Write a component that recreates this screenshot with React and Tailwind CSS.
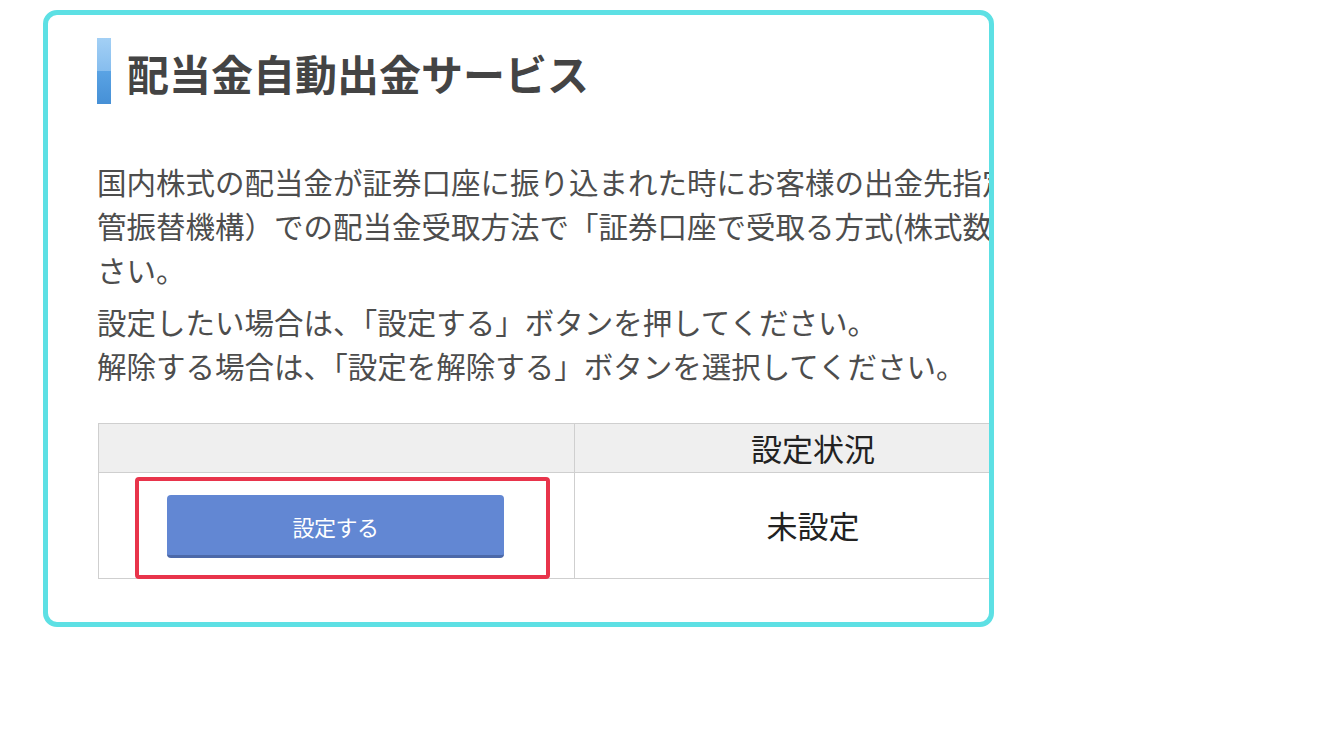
const JP = { fontFamily: '"Hiragino Sans", "Noto Sans CJK JP", "Noto Sans", sans-serif' };

export default function App() {
  return (
    <div className="w-[1320px] h-[743px] bg-white pt-[10px] pl-[43px]" style={JP}>
      {/* card */}
      <div className="w-[951px] h-[617px] border-[5px] border-[#5de0e4] rounded-[14px] overflow-hidden pl-[49px] pt-[23px] bg-white">
        {/* heading */}
        <div className="flex items-center">
          <div className="w-[14px] h-[66px] flex flex-col">
            <div className="flex-1 bg-gradient-to-b from-[#a3d0f5] to-[#86bdee]" />
            <div className="flex-1 bg-gradient-to-b from-[#5aa3e4] to-[#4690d6]" />
          </div>
          <h1 className="ml-[16px] mt-[3px] text-[42px] leading-none font-bold text-[#444]">
            配当金自動出金サービス
          </h1>
        </div>

        {/* description */}
        <div className="mt-[55px] text-[29.5px] leading-[44px] text-[#4d4d4d] whitespace-nowrap">
          <p>
            国内株式の配当金が証券口座に振り込まれた時にお客様の出金先指定口座へ自動的に出金するサービスです。ご利用には、証券保
            <br />
            管振替機構）での配当金受取方法で「証券口座で受取る方式(株式数比例配分方式)」を選択いただく必要がございます。ご確認くだ
            <br />
            さい。
          </p>
          <p className="mt-[8px]">
            設定したい場合は、「設定する」ボタンを押してください。
            <br />
            解除する場合は、「設定を解除する」ボタンを選択してください。
          </p>
        </div>

        {/* settings table */}
        <div className="mt-[36px] w-[954px] border border-[#cfcfcf] ml-px">
          <div className="grid grid-cols-[476px_1fr] h-[49px] bg-[#efefef] border-b border-[#cfcfcf]">
            <div className="border-r border-[#cfcfcf]" />
            <div className="flex items-center justify-center text-[31px] text-[#222]">設定状況</div>
          </div>
          <div className="grid grid-cols-[476px_1fr] h-[105px]">
            <div className="relative border-r border-[#cfcfcf] flex items-center pl-[68px]">
              <button className="w-[337px] h-[63px] mt-[2px] pt-[3px] rounded-[4px] bg-[#6287d3] border-b-[3px] border-[#4c69a9] text-white text-[22px] tracking-[-0.5px]">
                設定する
              </button>
              {/* highlight */}
              <div className="absolute left-[36px] top-[4px] w-[415px] h-[102px] border-[4px] border-[#e8344b] rounded-[4px]" />
            </div>
            <div className="flex items-center justify-center text-[31px] text-[#222]">未設定</div>
          </div>
        </div>
      </div>
    </div>
  );
}
